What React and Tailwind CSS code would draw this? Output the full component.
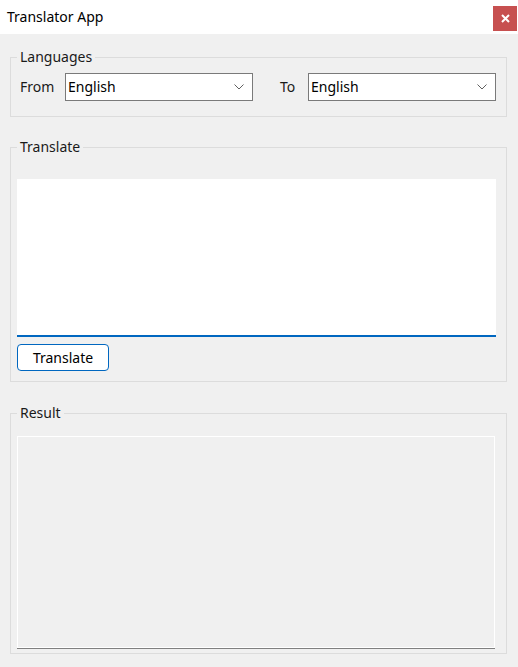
import React from "react";

function Chevron() {
  return (
    <svg width="10" height="6" viewBox="0 0 10 6" className="shrink-0">
      <path d="M0.5 0.5 L5 5 L9.5 0.5" fill="none" stroke="#606060" strokeWidth="1" />
    </svg>
  );
}

function Combo() {
  return (
    <div className="w-[188px] h-[28px] bg-white border border-[#7a7a7a] flex items-center justify-between pl-[2px] pr-[8px] pb-[1px]">
      <span className="text-[14px] leading-none text-black">English</span>
      <Chevron />
    </div>
  );
}

function Legend({ children, className = "" }) {
  return (
    <legend className={"px-[3px] text-[14px] leading-[20px] text-[#1a1a1a] " + className}>{children}</legend>
  );
}

export default function App() {
  return (
    <div
      className="w-[518px] h-[667px] bg-[#f0f0f0] flex flex-col overflow-hidden"
      style={{ fontFamily: '"Noto Sans", "Open Sans", sans-serif' }}
    >
      <div className="h-[34px] bg-white flex items-start justify-between shrink-0">
        <span className="pl-[7px] pt-[7px] text-[14px] leading-[20px] text-black">Translator App</span>
        <button className="mt-[6px] mr-[1px] w-[24px] h-[25px] bg-[#c75050] flex items-center justify-center">
          <svg width="9" height="9" viewBox="0 0 9 9">
            <path d="M1 1 L8 8 M8 1 L1 8" stroke="white" strokeWidth="2" />
          </svg>
        </button>
      </div>

      <fieldset className="mt-[13px] ml-[10px] mr-[11px] border border-[#dcdcdc] px-0 pt-[6px] pb-[15px] min-w-0">
        <Legend className="ml-[6px]">Languages</Legend>
        <div className="flex items-center pl-[9px]">
          <span className="text-[14px] leading-none text-[#1a1a1a] w-[45px]">From</span>
          <Combo />
          <span className="ml-[27px] text-[14px] leading-none text-[#1a1a1a] w-[28px]">To</span>
          <Combo />
        </div>
      </fieldset>

      <fieldset className="mt-[20px] ml-[10px] mr-[11px] border border-[#dcdcdc] pl-[6px] pr-[10px] pt-[22px] pb-[10px] min-w-0">
        <Legend>Translate</Legend>
        <div className="h-[158px] bg-white border-b-2 border-[#0067c0]"></div>
        <button className="mt-[7px] w-[92px] h-[27px] bg-white border border-[#0067c0] rounded-[4px] text-[14px] leading-none text-black flex items-center justify-center">
          Translate
        </button>
      </fieldset>

      <fieldset className="mt-[21px] ml-[10px] mr-[11px] border border-[#dcdcdc] pl-[6px] pr-[11px] pt-[13px] pb-[4px] min-w-0">
        <Legend>Result</Legend>
        <div className="border-b border-[#808080]">
          <div className="h-[212px] border border-white bg-[#f0f0f0]"></div>
        </div>
      </fieldset>
    </div>
  );
}
